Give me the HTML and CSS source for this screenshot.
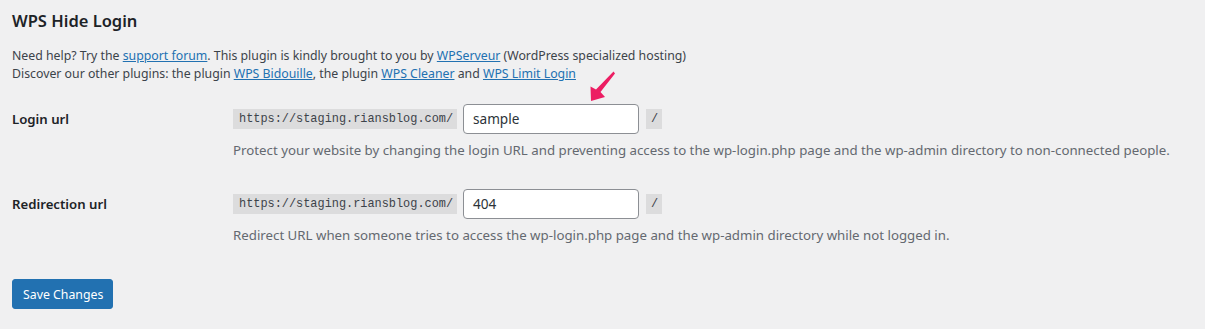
FILE: index.html
```html
<!DOCTYPE html>
<html>
<head>
<meta charset="utf-8">
<link rel="stylesheet" href="styles.css">
</head>
<body>
<div class="wrap">
  <h2 class="title">WPS Hide Login</h2>
  <p class="intro">Need help? Try the <a href="#">support forum</a>. This plugin is kindly brought to you by <a href="#">WPServeur</a> (WordPress specialized hosting)<br>Discover our other plugins: the plugin <a href="#">WPS Bidouille</a>, the plugin <a href="#">WPS Cleaner</a> and <a href="#">WPS Limit Login</a></p>
  <div class="form-table">
    <div class="row">
      <div class="label">Login url</div>
      <div class="field">
        <div class="inline">
          <code class="prefix">https://staging.riansblog.com/</code>
          <span class="input">sample</span>
          <code class="slash">/</code>
        </div>
        <p class="desc">Protect your website by changing the login URL and preventing access to the wp-login.php page and the wp-admin directory to non-connected people.</p>
      </div>
    </div>
    <div class="row">
      <div class="label">Redirection url</div>
      <div class="field">
        <div class="inline">
          <code class="prefix">https://staging.riansblog.com/</code>
          <span class="input">404</span>
          <code class="slash">/</code>
        </div>
        <p class="desc">Redirect URL when someone tries to access the wp-login.php page and the wp-admin directory while not logged in.</p>
      </div>
    </div>
  </div>
  <button class="btn">Save Changes</button>
  <svg class="arrow" width="40" height="40" viewBox="0 0 40 40">
    <path d="M31.5 5.5 L33 7.5 L18.5 26 L23 31 L9 35 L8.5 20.5 L14 23.5 Z" fill="#ec1e63"/>
  </svg>
</div>
</body>
</html>
```
FILE: styles.css
```css
html, body {
  margin: 0;
  padding: 0;
  background: #f0f0f1;
}
body {
  font-family: "Noto Sans", "Segoe UI", sans-serif;
  font-size: 12.3px;
  line-height: 1.4;
  color: #3c434a;
}
.wrap {
  position: relative;
  padding: 0 12px;
}
.title {
  margin: 0;
  padding-top: 10px;
  font-size: 16.5px;
  font-weight: 600;
  color: #1d2327;
  line-height: 22px;
}
.intro {
  margin: 15px 0 0;
  line-height: 18px;
}
a {
  color: #2271b1;
  text-decoration: underline;
}
.form-table {
  margin-top: 21px;
}
.row {
  display: grid;
  grid-template-columns: 221px 1fr;
}
.row + .row {
  margin-top: 29px;
}
.label {
  font-size: 13.2px;
  font-weight: 600;
  color: #1d2327;
  padding-top: 5px;
  line-height: 20px;
}
.inline {
  display: flex;
  align-items: center;
  height: 30px;
}
.prefix, .slash {
  font-family: "Liberation Mono", monospace;
  font-size: 11.9px;
  background: #dcdcdd;
  color: #3c434a;
  padding: 0 6px;
  height: 20px;
  line-height: 20px;
}
.prefix {
  width: 212px;
}
.input {
  box-sizing: border-box;
  width: 176px;
  height: 30px;
  margin: 0 7px 0 6px;
  padding: 0 9px;
  border: 1px solid #8c8f94;
  border-radius: 4px;
  background: #fff;
  color: #2c3338;
  font-size: 13.6px;
  line-height: 28px;
}
.slash {
  padding: 0 5px;
  width: 6px;
}
.desc {
  margin: 6px 0 0;
  color: #646970;
  font-size: 13.28px;
  line-height: 20px;
}
.btn {
  display: block;
  margin-top: 34px;
  height: 30px;
  padding: 0 10px;
  background: #2271b1;
  color: #fff;
  border: 1px solid #2271b1;
  border-radius: 3px;
  font-family: inherit;
  font-size: 12.3px;
  white-space: nowrap;
  width: 101px;
}
.arrow {
  position: absolute;
  left: 582px;
  top: 66px;
}
```
